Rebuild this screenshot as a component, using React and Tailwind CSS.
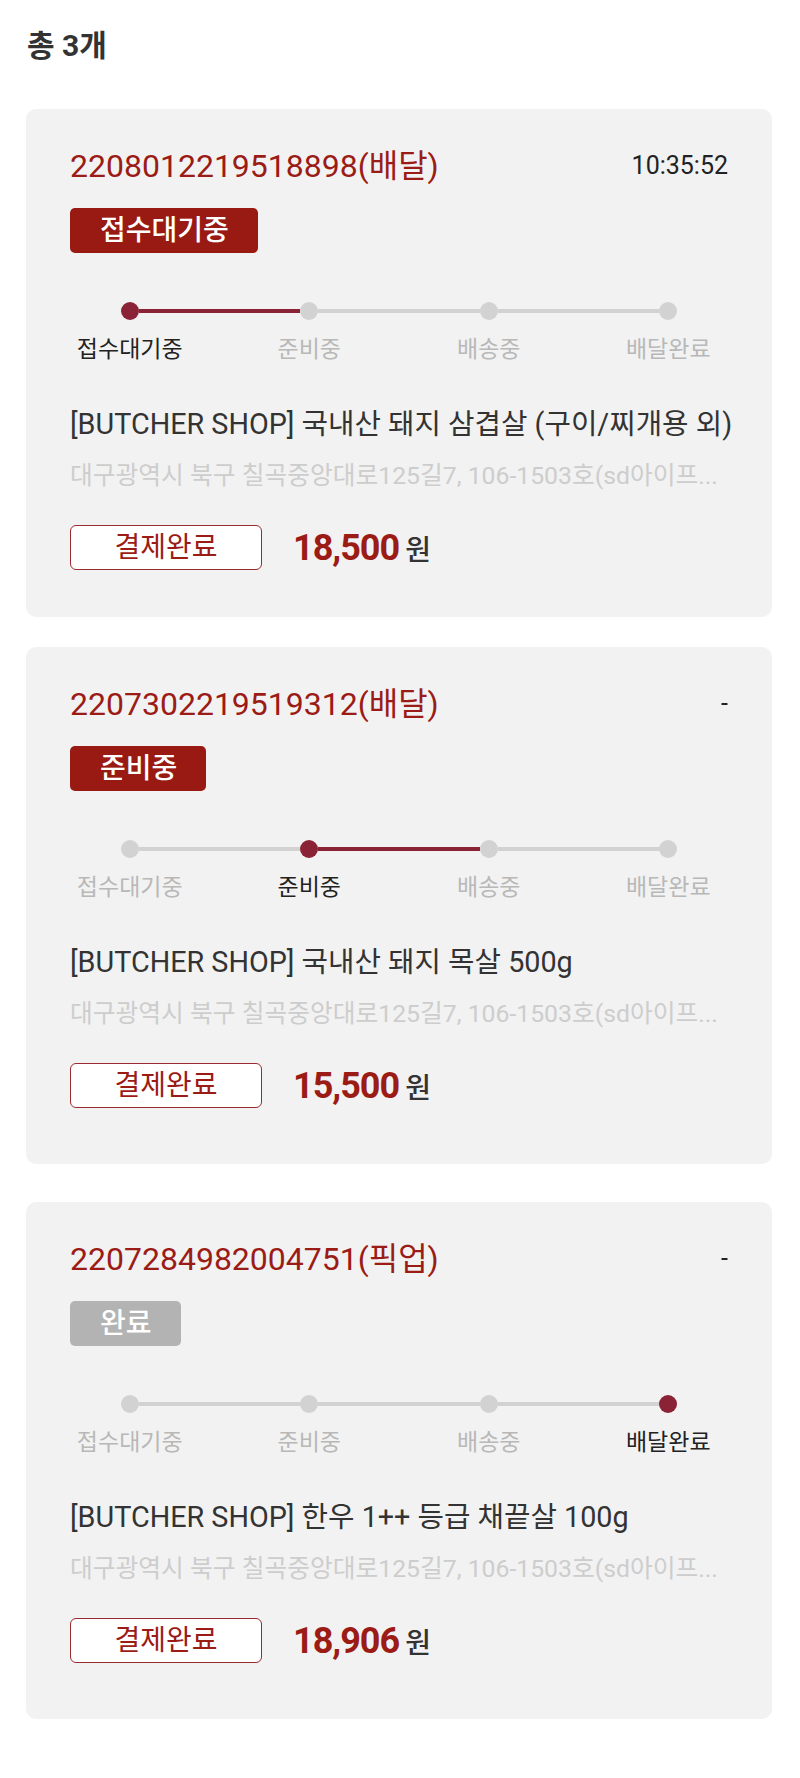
import React, { Fragment } from 'react';

const STEPS = ['접수대기중', '준비중', '배송중', '배달완료'];
const ADDRESS = '대구광역시 북구 칠곡중앙대로125길7, 106-1503호(sd아이프...';

const orders = [
  {
    no: '2208012219518898',
    type: '배달',
    time: '10:35:52',
    status: '접수대기중',
    badge: 'bg-[#981a13]',
    step: 0,
    product: '[BUTCHER SHOP] 국내산 돼지 삼겹살 (구이/찌개용 외)',
    price: '18,500',
    card: 'pb-[47px]',
  },
  {
    no: '2207302219519312',
    type: '배달',
    time: '-',
    status: '준비중',
    badge: 'bg-[#981a13]',
    step: 1,
    product: '[BUTCHER SHOP] 국내산 돼지 목살 500g',
    price: '15,500',
    card: 'mt-[30px] pb-[56px]',
  },
  {
    no: '2207284982004751',
    type: '픽업',
    time: '-',
    status: '완료',
    badge: 'bg-[#b3b3b3]',
    step: 3,
    product: '[BUTCHER SHOP] 한우 1++ 등급 채끝살 100g',
    price: '18,906',
    card: 'mt-[38px] pb-[56px]',
  },
];

const Progress = ({ step }) => (
  <div className="-mx-[30px] mt-[49px]">
    <div className="flex h-[18px] items-center px-[81px]">
      {STEPS.map((s, i) => (
        <Fragment key={s}>
          <span className={`h-[18px] w-[18px] shrink-0 rounded-full ${i === step ? 'bg-[#8b2337]' : 'bg-[#d2d2d2]'}`} />
          {i < STEPS.length - 1 && (
            <span className={`h-1 flex-1 ${i === step ? 'bg-[#8b2337]' : 'bg-[#d2d2d2]'}`} />
          )}
        </Fragment>
      ))}
    </div>
    <div className="mt-4 grid grid-cols-4">
      {STEPS.map((s, i) => (
        <div
          key={s}
          className={`flex h-[26px] items-center justify-center text-[23px] leading-none ${i === step ? 'text-[#222]' : 'text-[#b8b8b8]'}`}
        >
          {s}
        </div>
      ))}
    </div>
  </div>
);

const OrderCard = ({ order }) => (
  <div className={`rounded-[10px] bg-[#f2f2f2] px-[44px] pt-[38px] ${order.card}`}>
    <div className="flex h-[37px] items-center justify-between">
      <span className="text-[32px] leading-none text-[#9b1c16]">
        {order.no}({order.type})
      </span>
      <span className="text-[25px] leading-none text-[#222]">{order.time}</span>
    </div>

    <div className="mt-6 flex">
      <span className={`flex h-[45px] items-center rounded-[5px] pl-[30px] pr-[29px] text-[28px] font-medium leading-none text-white ${order.badge}`}>
        {order.status}
      </span>
    </div>

    <Progress step={order.step} />

    <div className="mt-[45px] flex h-[34px] items-center whitespace-nowrap text-[28.75px] leading-none text-[#333]">
      {order.product}
    </div>
    <div className="mt-[19px] flex h-[32px] items-center whitespace-nowrap text-[24.75px] leading-none text-[#cdcdcd]">
      {ADDRESS}
    </div>

    <div className="mt-[33px] flex items-center">
      <div className="flex h-[45px] w-[192px] items-center justify-center rounded-md border border-[#9b2a30] bg-white text-[28px] leading-none text-[#9b1b15]">
        결제완료
      </div>
      <div className="ml-[31px] flex items-baseline">
        <span className="text-[36px] font-bold leading-none tracking-[-1px] text-[#9b1b15]">{order.price}</span>
        <span className="ml-[6px] text-[28px] font-medium leading-none text-[#333]">원</span>
      </div>
    </div>
  </div>
);

export default function App() {
  return (
    <div className="min-h-[1778px] bg-white pl-[26px] pr-[28px] font-[Roboto,'Noto_Sans_CJK_KR',sans-serif]">
      <h1 className="pl-px pt-[31px] text-[30px] font-bold leading-none text-[#333]">총 3개</h1>
      <div className="mt-[48px]">
        {orders.map((o) => (
          <OrderCard key={o.no} order={o} />
        ))}
      </div>
    </div>
  );
}
